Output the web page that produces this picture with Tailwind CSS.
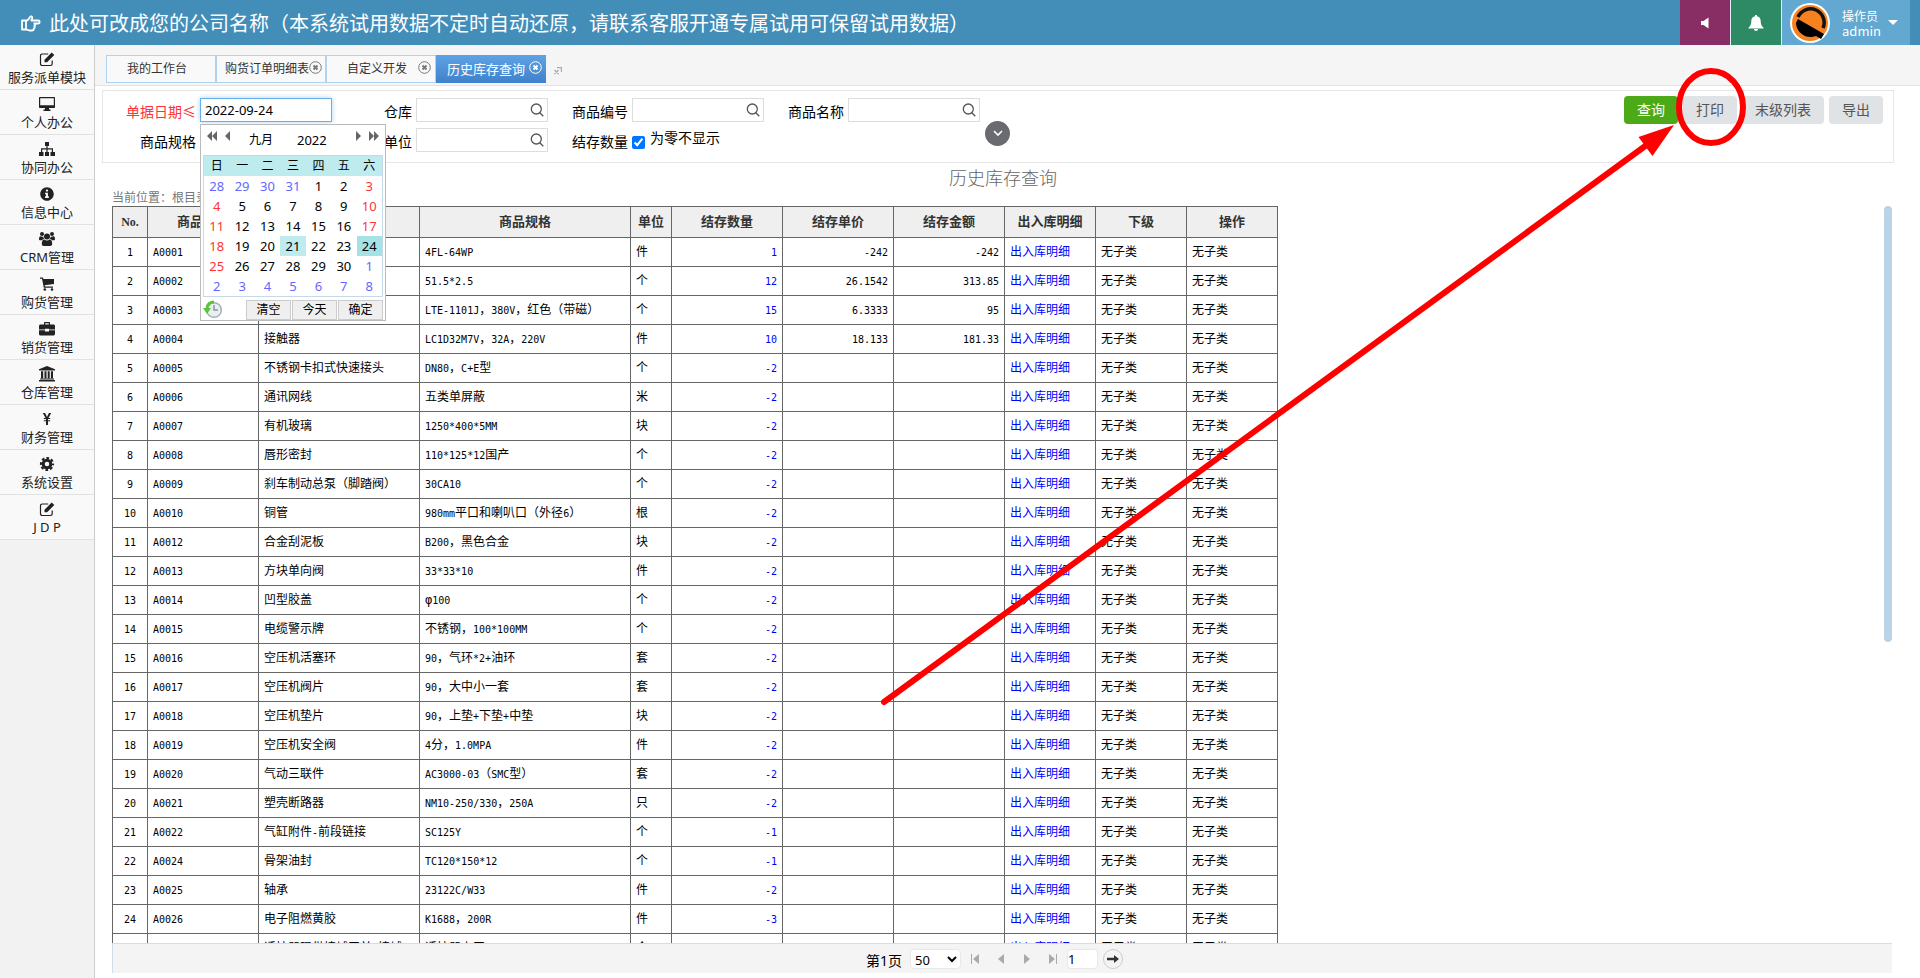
<!DOCTYPE html>
<html lang="zh-CN">
<head>
<meta charset="utf-8">
<title>历史库存查询</title>
<script src="https://cdn.jsdelivr.net/npm/@tailwindcss/browser@4"></script>
</head>
<body class="relative flex h-screen flex-col overflow-hidden bg-white font-['Noto_Sans','Noto_Sans_CJK_SC',sans-serif] text-sm text-black">

<header class="flex h-[45px] shrink-0 items-stretch bg-[#438eb9] text-white">
  <h1 class="flex flex-1 items-center gap-2 pl-[21px] font-['Noto_Sans_CJK_SC',sans-serif] text-xl font-normal whitespace-nowrap">
    <svg class="h-5 w-5" viewBox="0 0 20 20" fill="none" stroke="currentColor" stroke-width="1.8" stroke-linejoin="round"><path d="M1 7.5h4v9H1zM5 8c2-.5 3-2.500 4-4 .6-1 2.300-.8 2.300.8 0 1.200-.8 2-1 2.700h6.900c2 0 2 3 0 3h-4.700M13 10.500c1.500.4 1.400 2.300.2 2.700 1 .7.600 2.100-.500 2.400.3 1.200-.7 1.900-1.700 1.900H9c-1.800 0-2.500-1-4-1"/></svg>
    <span>此处可改成您的公司名称（本系统试用数据不定时自动还原，请联系客服开通专属试用可保留试用数据）</span>
  </h1>
  <nav class="flex items-stretch gap-px bg-[#e1edf5] mr-2.5">
    <button type="button" aria-label="声音" class="flex w-[50px] items-center justify-center bg-[#892e65]">
      <svg class="h-3 w-3" viewBox="0 0 12 12" fill="currentColor"><path d="M2 4h2.500L9.500.5v11L4.500 8H2z"/></svg>
    </button>
    <button type="button" aria-label="通知" class="flex w-[50px] items-center justify-center bg-[#2e8965]">
      <svg class="h-4 w-4" viewBox="0 0 16 16" fill="currentColor"><path d="M8 0c.8 0 1.200.5 1.200 1.200C11.700 1.800 12.700 4 12.700 6c0 3.500 1 5 2.800 6.800v.7H.5v-.7C2.300 11 3.300 9.500 3.300 6c0-2 1-4.200 3.500-4.800C6.800.5 7.200 0 8 0zM6 14h4c0 1.200-.9 2-2 2s-2-.8-2-2z"/></svg>
    </button>
    <button type="button" class="flex w-32 items-center bg-[#62a8d1] pl-2 text-left">
      <svg class="h-10 w-10" viewBox="0 0 40 40"><circle cx="20" cy="20" r="20" fill="#fff"/><circle cx="20" cy="20" r="18" fill="#f5821f"/><path d="M8 14a13.500 13.500 0 1 1 25 11" fill="none" stroke="#111" stroke-width="3.500"/><path d="M8 16L34 31l-3 5-5-3C16 37 6 29 6 20z" fill="#000"/></svg>
      <span class="ml-3 flex-1 font-['Noto_Sans_CJK_SC',sans-serif] text-xs leading-[15px]">操作员<br><span class="text-[13px]">admin</span></span>
      <svg class="mr-3 h-[5px] w-2.5" viewBox="0 0 10 5" fill="currentColor"><path d="M0 0h10L5 5z"/></svg>
    </button>
  </nav>
</header>

<div class="flex min-h-0 flex-1">
  <aside class="w-[95px] shrink-0 border-r border-[#ccc] bg-[#f2f2f2]">
    <ul id="menu" class="text-[13px] text-[#222]"></ul>
  </aside>

  <main class="flex min-w-0 flex-1 flex-col">
    <div class="flex h-[41px] shrink-0 items-end border-b border-[#e2e2e2] bg-[#f5f5f5] pb-0.5 pl-[11px] text-[#333]">
      <a href="#" class="flex h-7 w-[110px] items-center justify-center border border-[#b0d4f0] bg-[#f9f9f9] pr-2 text-xs">我的工作台</a>
      <a href="#" class="flex h-7 w-[110px] items-center border border-[#b0d4f0] bg-[#f9f9f9] pl-2 text-xs whitespace-nowrap">购货订单明细表
        <svg class="mb-1 h-[13px] w-[13px] shrink-0" viewBox="0 0 13 13" fill="none" stroke="#777"><circle cx="6.500" cy="6.500" r="5.800"/><path stroke-width="2" d="M4.500 4.500l4 4m0-4l-4 4"/></svg></a>
      <a href="#" class="flex h-7 w-[110px] items-center justify-between border border-[#b0d4f0] bg-[#f9f9f9] pr-1 pl-5 text-xs">自定义开发
        <svg class="mb-1 h-[13px] w-[13px] shrink-0" viewBox="0 0 13 13" fill="none" stroke="#777"><circle cx="6.500" cy="6.500" r="5.800"/><path stroke-width="2" d="M4.500 4.500l4 4m0-4l-4 4"/></svg></a>
      <a href="#" class="flex h-7 w-[110px] items-center justify-between bg-linear-to-b from-[#5ea2e6] to-[#3f82cc] pr-1 pl-[11px] text-[13px] text-white">历史库存查询
        <svg class="mb-1 h-[13px] w-[13px] shrink-0" viewBox="0 0 13 13" fill="none" stroke="#fff"><circle cx="6.500" cy="6.500" r="5.800"/><path stroke-width="2" d="M4.500 4.500l4 4m0-4l-4 4"/></svg></a>
      <button type="button" aria-label="展开" class="mb-2 ml-2"><svg class="h-2 w-2" viewBox="0 0 8 8" fill="none" stroke="#aaa"><path d="M3 .5h4.500V5M.5 3l4 4m0-4l-4 4" stroke-width="1.300"/></svg></button>
    </div>

    <form class="relative mt-1 mr-[26px] ml-[7px] flex h-[73px] shrink-0 border border-[#e6e6e6] pt-[7px] pl-[13px]">
      <div class="flex flex-1 flex-col gap-1.5">
        <div class="flex h-6 items-center">
          <div class="relative flex w-[216px] items-center">
            <label for="date" class="w-[84px] pt-1 pr-1 text-right leading-5 text-[#f33]">单据日期≤</label>
            <input id="date" value="2022-09-24" class="h-6 w-[132px] border border-[#66afe9] px-1 text-[13px] shadow-[0_0_5px_#a8d0f0] outline-none">
            <div class="absolute top-[26px] left-[84px] z-10 w-[186px] border border-[#bbb] bg-white px-0.5 pb-px text-[13px]">
              <div class="flex h-[30px] items-center px-1">
                <button type="button" aria-label="上一年" class="mb-2"><svg class="h-2.5 w-2.5" viewBox="0 0 10 10" fill="#666"><path d="M5 0v10L0 5zM10 0v10L5 5z"/></svg></button>
                <button type="button" aria-label="上一月" class="mb-2 ml-2"><svg class="h-2.5 w-[5px]" viewBox="0 0 5 10" fill="#666"><path d="M5 0v10L0 5z"/></svg></button>
                <span class="ml-[19px] w-12 text-xs">九月</span><span class="flex-1">2022</span>
                <button type="button" aria-label="下一月" class="mb-2"><svg class="h-2.5 w-[5px]" viewBox="0 0 5 10" fill="#666"><path d="M0 0v10l5-5z"/></svg></button>
                <button type="button" aria-label="下一年" class="mb-2 ml-2"><svg class="h-2.5 w-2.5" viewBox="0 0 10 10" fill="#666"><path d="M0 0v10l5-5zM5 0v10l5-5z"/></svg></button>
              </div>
              <table class="w-full table-fixed border-separate border-spacing-0 border border-[#c5d9e8] text-center leading-5">
                <thead class="bg-[#bdebee] text-xs leading-5"><tr><th class="font-normal">日</th><th class="font-normal">一</th><th class="font-normal">二</th><th class="font-normal">三</th><th class="font-normal">四</th><th class="font-normal">五</th><th class="font-normal">六</th></tr></thead>
                <tbody id="days"></tbody>
              </table>
              <div class="flex h-[22px] items-center gap-px pt-1 text-xs">
                <svg class="h-5 w-5" viewBox="0 0 20 20" fill="none"><circle cx="11" cy="10" r="7.300" fill="#e9eef0" stroke="#a5b0b5" stroke-width="1.500"/><path d="M11 5v5h4" stroke="#8a979d" stroke-width="1.500"/><path d="M11 2C6.500 2 4.500 5 4 8" stroke="#5cc43c" stroke-width="3"/><path d="M0 8h8l-4 6z" fill="#5cc43c"/></svg>
                <span class="flex-1"></span>
                <button type="button" class="h-5 w-[45px] border border-[#ccc] bg-[#efefef] leading-4">清空</button>
                <button type="button" class="h-5 w-[45px] border border-[#ccc] bg-[#efefef] leading-4">今天</button>
                <button type="button" class="h-5 w-[45px] border border-[#ccc] bg-[#efefef] leading-4">确定</button>
              </div>
            </div>
          </div>
          <div class="flex w-[216px] items-center"><label for="wh" class="w-[84px] pt-1 pr-1 text-right leading-5">仓库</label>
            <span class="relative"><input id="wh" class="block h-6 w-[132px] border border-[#ddd] pr-6 pl-1 text-[13px]"><svg class="absolute top-[5px] right-1 h-[14px] w-[14px]" viewBox="0 0 14 14" fill="none" stroke="#555" stroke-width="1.300"><circle cx="6.300" cy="6" r="5"/><path d="M9.500 9.500l3.800 3.800"/></svg></span></div>
          <div class="flex w-[216px] items-center"><label for="code" class="w-[84px] pt-1 pr-1 text-right leading-5">商品编号</label>
            <span class="relative"><input id="code" class="block h-6 w-[132px] border border-[#ddd] pr-6 pl-1 text-[13px]"><svg class="absolute top-[5px] right-1 h-[14px] w-[14px]" viewBox="0 0 14 14" fill="none" stroke="#555" stroke-width="1.300"><circle cx="6.300" cy="6" r="5"/><path d="M9.500 9.500l3.800 3.800"/></svg></span></div>
          <div class="flex w-[216px] items-center"><label for="name" class="w-[84px] pt-1 pr-1 text-right leading-5">商品名称</label>
            <span class="relative"><input id="name" class="block h-6 w-[132px] border border-[#ddd] pr-6 pl-1 text-[13px]"><svg class="absolute top-[5px] right-1 h-[14px] w-[14px]" viewBox="0 0 14 14" fill="none" stroke="#555" stroke-width="1.300"><circle cx="6.300" cy="6" r="5"/><path d="M9.500 9.500l3.800 3.800"/></svg></span></div>
          <button type="button" aria-label="更多条件" class="mt-[46px] ml-[5px] flex h-[25px] w-[25px] items-center justify-center rounded-full bg-[#6a6b70]"><svg class="h-2 w-2.5" viewBox="0 0 10 8" fill="none" stroke="#fff" stroke-width="1.600"><path d="M1 2l4 4 4-4"/></svg></button>
        </div>
        <div class="flex h-6 items-center">
          <div class="flex w-[216px] items-center"><label for="spec" class="w-[84px] pt-1 pr-1 text-right leading-5">商品规格</label><input id="spec" class="h-6 w-[132px] border border-[#ddd] px-1"></div>
          <div class="flex w-[216px] items-center"><label for="unit" class="w-[84px] pt-1 pr-1 text-right leading-5">单位</label>
            <span class="relative"><input id="unit" class="block h-6 w-[132px] border border-[#ddd] pr-6 pl-1 text-[13px]"><svg class="absolute top-[5px] right-1 h-[14px] w-[14px]" viewBox="0 0 14 14" fill="none" stroke="#555" stroke-width="1.300"><circle cx="6.300" cy="6" r="5"/><path d="M9.500 9.500l3.800 3.800"/></svg></span></div>
          <div class="flex items-center"><span class="w-[84px] pt-1 pr-1 text-right leading-5">结存数量</span>
            <input id="zero" type="checkbox" checked class="mt-1 h-[13px] w-[13px] accent-[#0075ff]"><label for="zero" class="mb-1 ml-[5px] leading-5">为零不显示</label></div>
        </div>
      </div>
      <div class="flex h-7 gap-[5px] pr-2.5 text-[#555] -mt-0.5">
        <button type="button" class="h-7 rounded-sm bg-[#4caa18] px-[13px] text-white">查询</button>
        <button type="button" class="h-7 rounded-sm bg-[#e0e3e6] px-[13px]">打印</button>
        <button type="button" class="h-7 rounded-sm bg-[#e0e3e6] px-[13px]">末级列表</button>
        <button type="button" class="h-7 rounded-sm bg-[#e0e3e6] px-[13px]">导出</button>
      </div>
    </form>

    <h2 class="mr-[9px] h-7 shrink-0 text-center font-['Noto_Sans_CJK_SC',sans-serif] text-lg leading-7 font-light text-[#666]">历史库存查询</h2>
    <p class="h-[15px] shrink-0 pl-[17px] text-xs leading-[14px] text-[#777]">当前位置：根目录</p>

    <div class="ml-[17px] flex min-h-0 flex-1 items-start overflow-hidden">
      <div class="flex-1">
      <table class="w-[1166px] table-fixed border-collapse border border-[#666] font-['DejaVu_Sans_Mono','Noto_Sans_CJK_SC',monospace] text-xs leading-4">
        <colgroup><col class="w-[35px]"><col class="w-[111px]"><col class="w-[161px]"><col class="w-[211px]"><col class="w-[41px]"><col class="w-[111px]"><col class="w-[111px]"><col class="w-[111px]"><col class="w-[91px]"><col class="w-[91px]"><col class="w-[91px]"></colgroup>
        <thead><tr class="h-[31px] bg-[#efefef] text-[13px] text-[#333] *:border *:border-[#666]"><th class="font-['Liberation_Serif'] text-xs">No.</th><th>商品编号</th><th>商品名称</th><th>商品规格</th><th>单位</th><th>结存数量</th><th>结存单价</th><th>结存金额</th><th>出入库明细</th><th>下级</th><th>操作</th></tr></thead>
        <tbody id="rows"></tbody>
      </table>
      </div>
      <div class="mr-7 h-[436px] w-2 rounded-full bg-[#bbd3e6]"></div>
    </div>

    <footer class="mr-7 mb-[5px] ml-[17px] flex h-[30px] shrink-0 items-center justify-center border-t border-l border-[#d3dde6] bg-[#f4f4f4] pr-4">
      <label for="size" class="mr-2 pt-1">第1页</label>
      <select id="size" class="h-5 w-[51px] rounded-sm border border-[#e8e8e8] bg-white text-[13px]"><option>50</option></select>
      <div class="mx-2.5 flex w-[86px] items-center justify-between">
        <button type="button" aria-label="首页"><svg class="h-2.5 w-2" viewBox="0 0 8 10" fill="#aaa"><path d="M0 0h1v10H0zM8 0v10L2 5z"/></svg></button>
        <button type="button" aria-label="上一页"><svg class="h-2.5 w-1.5" viewBox="0 0 6 10" fill="#aaa"><path d="M6 0v10L0 5z"/></svg></button>
        <button type="button" aria-label="下一页"><svg class="h-2.5 w-1.5" viewBox="0 0 6 10" fill="#aaa"><path d="M0 0v10l6-5z"/></svg></button>
        <button type="button" aria-label="末页"><svg class="h-2.5 w-2" viewBox="0 0 8 10" fill="#aaa"><path d="M7 0h1v10H7zM0 0v10l6-5z"/></svg></button>
      </div>
      <input aria-label="页码" value="1" class="h-5 w-[31px] rounded-sm border border-[#e8e8e8] bg-white text-[13px]">
      <button type="button" aria-label="跳转" class="ml-[5px] flex h-5 w-5 items-center justify-center rounded-full border border-[#ccc]"><svg class="h-2.5 w-3" viewBox="0 0 12 10" fill="#333"><path d="M0 3.800h7V1l5 4-5 4V6.200H0z"/></svg></button>
    </footer>
  </main>
</div>

<svg class="pointer-events-none absolute top-0 right-0 h-[720px] w-[1060px]" viewBox="860 0 1060 720" fill="none" stroke="#f00" stroke-width="6">
  <ellipse cx="1711" cy="107" rx="32" ry="36"/>
  <path d="M884 702L1648 144" stroke-linecap="round"/>
  <path d="M1674 125L1638.500 137 1652.500 156z" fill="#f00" stroke="none"/>
</svg>

<script>
const edit = '<path d="M13.200 9.500v3.300c0 1-.7 1.700-1.700 1.700H3.200c-1 0-1.700-.7-1.700-1.700V4.700C1.500 3.700 2.200 3 3.200 3h6" fill="none" stroke="currentColor" stroke-width="1.200"/><path d="M5.500 11.300V8.700l7.200-7.200 2.600 2.600-7.200 7.200z"/>';
const menu = [
  ['服务派单模块', edit],
  ['个人办公', '<path fill-rule="evenodd" d="M1 1h14c.6 0 1 .4 1 1v9c0 .6-.4 1-1 1h-5v1.500h1.500V15h-7v-1.500H6V12H1c-.6 0-1-.4-1-1V2c0-.6.4-1 1-1zm.2 1.200v7h13.600v-7z"/>'],
  ['协同办公', '<path d="M6 1h4v4H8.600v2.200H14V11h2v4h-4.500v-4h1.300V8.400H8.600V11h1.400v4H6v-4h1.400V8.400H3.200V11h1.300v4H0v-4h2V7.200h5.400V5H6z"/>'],
  ['信息中心', '<path transform="translate(1 1) scale(.0273)" d="M256 8C119.043 8 8 119.083 8 256c0 136.997 111.043 248 248 248s248-111.003 248-248C504 119.083 392.957 8 256 8zm0 80c23.196 0 42 18.804 42 42s-18.804 42-42 42-42-18.804-42-42 18.804-42 42-42zm68 302c0 7-5 12-12 12H196c-7 0-12-5-12-12v-36c0-7 5-12 12-12h22v-74h-22c-7 0-12-5-12-12v-30c0-7 5-12 12-12h84c7 0 12 5 12 12v116h20c7 0 12 5 12 12z"/>'],
  ['CRM管理', '<circle cx="3" cy="3" r="2"/><circle cx="13" cy="3" r="2"/><circle cx="8" cy="5.500" r="3"/><path d="M0 8.500C0 6.500.5 5.300 1.500 5.300c1 .5 2 .5 2.800.2 0 1.200.4 2 1 2.600-.8 0-1.800.4-2.300 1.100H1.200C.5 9.200 0 9 0 8.500zM16 8.500c0-2-.5-3.200-1.500-3.200-1 .5-2 .5-2.800.2 0 1.200-.4 2-1 2.600.8 0 1.800.4 2.300 1.100h1.800c.7 0 1.200-.2 1.200-.7zM2.800 13c0-3 .8-4.600 2.500-4.600 1.700 1.400 3.700 1.400 5.400 0 1.700 0 2.500 1.600 2.500 4.600 0 1.300-.8 2-2 2H4.800c-1.200 0-2-.7-2-2z"/>'],
  ['购货管理', '<path d="M1 1.500h3l.4 1.500H15v5l-9.300 1.200.3 1.300h8v1.200H4.800L3 2.700H1z"/><circle cx="5.800" cy="13.500" r="1.300"/><circle cx="13" cy="13.500" r="1.300"/>'],
  ['销货管理', '<path fill-rule="evenodd" d="M5 3.500V2c0-.6.400-1 1-1h4c.6 0 1 .4 1 1v1.500h3.500c.8 0 1.500.7 1.500 1.500v3.500h-6V7.700H6v.8H0V5c0-.8.7-1.500 1.500-1.500zm1.200 0h3.600V2.200H6.200zM0 9.300h6v1.200h4V9.300h6V13c0 .8-.7 1.500-1.500 1.500h-13C.7 14.500 0 13.800 0 13z"/>'],
  ['仓库管理', '<path d="M8 0l8 3.300v1.200H0V3.300zM2 5.300h2.200v7H2zm3.500 0h2v7h-2zm3.200 0h2v7h-2zm3.200 0H14v7h-2.100zM1 12.500h14v1H1zM0 14h16v1.500H0z"/>'],
  ['财务管理', '<path d="M3.800 2h2.300L8 6l1.900-4h2.300L9.500 7h1.700v1.100H9v1.100h2.200v1.100H9V14H7v-3.700H4.800V9.200H7V8.100H4.800V7h1.700z"/>'],
  ['系统设置', '<circle cx="8" cy="8" r="3.800" fill="none" stroke="currentColor" stroke-width="3"/><circle cx="8" cy="8" r="6" fill="none" stroke="currentColor" stroke-width="2.200" stroke-dasharray="2.700 2.012" stroke-dashoffset="1.350"/>'],
  ['J D P', edit]
];
document.getElementById('menu').innerHTML = menu.map(([t, p]) =>
  `<li><a href="#" class="flex h-[45px] flex-col items-center border-b border-[#e2e2e2] bg-[#f9f9f9] pt-1.5 whitespace-pre"><svg class="h-4 w-4" viewBox="0 0 16 16" fill="currentColor">${p}</svg><span class="leading-5">${t}</span></a></li>`).join('');

// Calendar page: six weeks starting on Sunday 28 August 2022
const first = new Date(2022, 7, 28);
let weeks = '';
for (let w = 0; w < 6; w++) {
  weeks += '<tr>';
  for (let d = 0; d < 7; d++) {
    const day = new Date(first.getFullYear(), first.getMonth(), first.getDate() + w * 7 + d);
    const n = day.getDate(), inMonth = day.getMonth() === 8;
    let cls = !inMonth ? 'text-[#66f]' : n === 24 ? 'bg-[#a5e2e6]' : n === 21 ? 'bg-[#bdebee]' : (d === 0 || d === 6) ? 'text-[#f33]' : '';
    weeks += `<td class="${cls}">${n}</td>`;
  }
  weeks += '</tr>';
}
document.getElementById('days').innerHTML = weeks;

const data = [
  ['A0001', '', '4FL-64WP', '件', '1', '-242', '-242'],
  ['A0002', '', '51.5*2.5', '个', '12', '26.1542', '313.85'],
  ['A0003', '', 'LTE-1101J，380V，红色（带磁）', '个', '15', '6.3333', '95'],
  ['A0004', '接触器', 'LC1D32M7V，32A，220V', '件', '10', '18.133', '181.33'],
  ['A0005', '不锈钢卡扣式快速接头', 'DN80，C+E型', '个', '-2'],
  ['A0006', '通讯网线', '五类单屏蔽', '米', '-2'],
  ['A0007', '有机玻璃', '1250*400*5MM', '块', '-2'],
  ['A0008', '唇形密封', '110*125*12国产', '个', '-2'],
  ['A0009', '刹车制动总泵（脚踏阀）', '30CA10', '个', '-2'],
  ['A0010', '铜管', '980mm平口和喇叭口（外径6）', '根', '-2'],
  ['A0012', '合金刮泥板', 'B200，黑色合金', '块', '-2'],
  ['A0013', '方块单向阀', '33*33*10', '件', '-2'],
  ['A0014', '凹型胶盖', 'φ100', '个', '-2'],
  ['A0015', '电缆警示牌', '不锈钢，100*100MM', '个', '-2'],
  ['A0016', '空压机活塞环', '90，气环*2+油环', '套', '-2'],
  ['A0017', '空压机阀片', '90，大中小一套', '套', '-2'],
  ['A0018', '空压机垫片', '90，上垫+下垫+中垫', '块', '-2'],
  ['A0019', '空压机安全阀', '4分，1.0MPA', '件', '-2'],
  ['A0020', '气动三联件', 'AC3000-03（SMC型）', '套', '-2'],
  ['A0021', '塑壳断路器', 'NM10-250/330，250A', '只', '-2'],
  ['A0022', '气缸附件-前段链接', 'SC125Y', '个', '-1'],
  ['A0024', '骨架油封', 'TC120*150*12', '个', '-1'],
  ['A0025', '轴承', '23122C/W33', '件', '-2'],
  ['A0026', '电子阻燃黄胶', 'K1688，200R', '件', '-3'],
  ['A0027', '适控器现供接辅工并-接辅', '适控器上工', '个', '-2']
];
// Latin runs are set smaller so that a letter is half as wide as a Chinese character
const mix = s => (s || '').replace(/[\x21-\x7e]+/g, '<span class="text-[10px]">$&</span>');
document.getElementById('rows').innerHTML = data.map((r, i) =>
  `<tr class="h-[29px] whitespace-nowrap *:border *:border-[#666] *:p-0 *:px-[5px]">
    <td class="text-center">${mix(String(i + 1))}</td><td>${mix(r[0])}</td><td>${mix(r[1])}</td><td>${mix(r[2])}</td><td>${r[3]}</td>
    <td class="text-right text-[#00f]">${mix(r[4])}</td><td class="text-right">${mix(r[5])}</td><td class="text-right">${mix(r[6])}</td>
    <td><a href="#" class="text-[#00f]">出入库明细</a></td><td>无子类</td><td>无子类</td></tr>`).join('');
</script>
</body>
</html>
